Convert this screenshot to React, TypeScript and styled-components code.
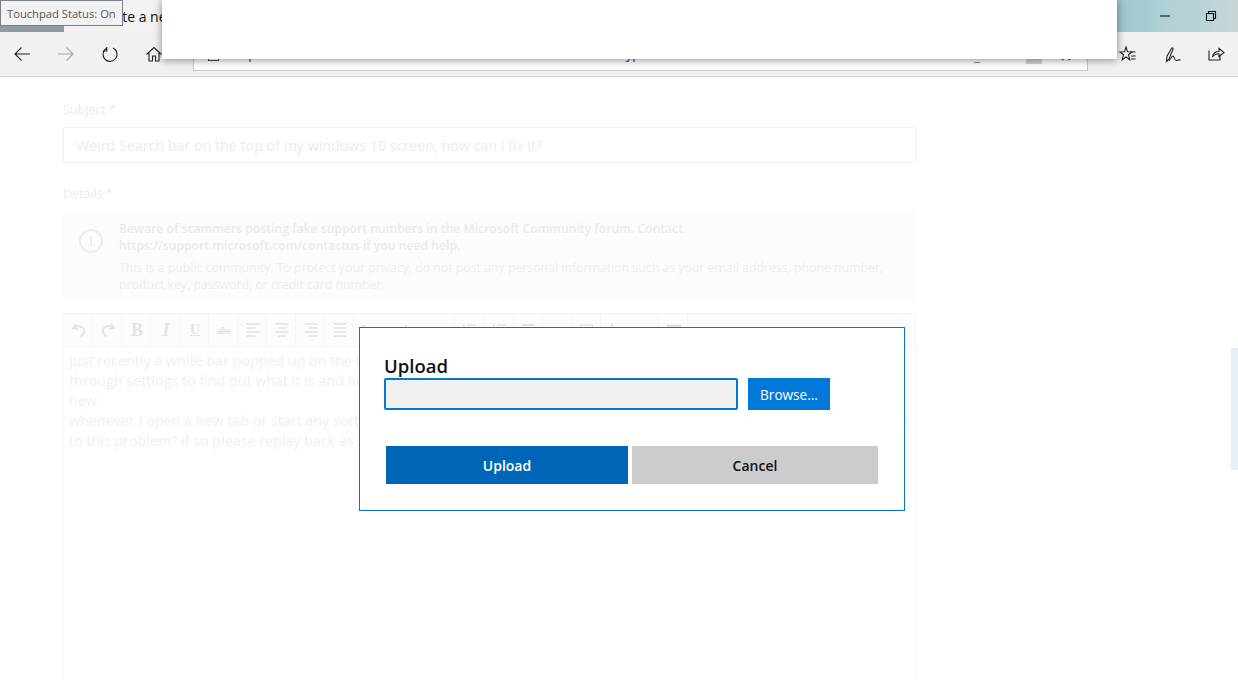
import React from "react"
import styled, { createGlobalStyle } from "styled-components"

const GlobalStyle = createGlobalStyle`
  html, body {
    margin: 0;
    padding: 0;
    background: #fff;
    overflow: hidden;
  }
  * {
    box-sizing: border-box;
  }
`;

const Icon = ({ children, color = "#222" }: { children: React.ReactNode; color?: string }) => (
  <svg width="20" height="20" viewBox="0 0 20 20" fill="none" stroke={color} strokeWidth="1.1">
    {children}
  </svg>
)

const EditorIcon = ({ children }: { children: React.ReactNode }) => (
  <svg width="16" height="16" viewBox="0 0 16 16" fill="none" stroke="#e3e3e3" strokeWidth="2">
    {children}
  </svg>
)

const alignLines = (a: number[], b: number[]) => (
  <>
    {[2, 6, 10, 14].map((y, i) => (
      <path key={y} d={`M${(i % 2 ? b : a)[0]} ${y}H${(i % 2 ? b : a)[1]}`} strokeWidth="1.6" />
    ))}
  </>
)

export default function App() {
  const tools: { id: string; node: React.ReactNode }[] = [
    { id: "undo", node: <EditorIcon><path d="M5 2L2 6l5 1M3 5.500C8 3 14 5 13 10c-.4 2-2 3.500-3.500 4.500" /></EditorIcon> },
    { id: "redo", node: <EditorIcon><path d="M11 2l3 4-5 1M13 5.500C8 3 2 5 3 10c.4 2 2 3.500 3.500 4.500" /></EditorIcon> },
    { id: "bold", node: <BoldGlyph>B</BoldGlyph> },
    { id: "italic", node: <ItalicGlyph>I</ItalicGlyph> },
    { id: "underline", node: <UnderGlyph>U</UnderGlyph> },
    { id: "strike", node: <StrikeGlyph>abc</StrikeGlyph> },
    { id: "left", node: <EditorIcon>{alignLines([1.5, 14.5], [1.5, 10.5])}</EditorIcon> },
    { id: "center", node: <EditorIcon>{alignLines([1.5, 14.5], [4, 12])}</EditorIcon> },
    { id: "right", node: <EditorIcon>{alignLines([1.5, 14.5], [5.5, 14.5])}</EditorIcon> },
    { id: "justify", node: <EditorIcon>{alignLines([1.5, 14.5], [1.5, 14.5])}</EditorIcon> },
  ]

  // the rest of this row is mostly behind the dialog, only the tops show
  const moreTools: { id: string; width: number; node?: React.ReactNode }[] = [
    { id: "format", width: 101, node: <EditorIcon><path d="M-36 4h5M8 4h2" strokeWidth="1.4" /></EditorIcon> },
    { id: "bullets", width: 29, node: <EditorIcon><path d="M2 2v3M5 3h9M2 8h12" strokeWidth="1.4" /></EditorIcon> },
    { id: "numbers", width: 30, node: <EditorIcon><path d="M2 2v3M5 3h9M2 8h12" strokeWidth="1.4" /></EditorIcon> },
    { id: "rule", width: 29, node: <EditorIcon><path d="M1 3h13" strokeWidth="2" /></EditorIcon> },
    { id: "blank", width: 29 },
    { id: "image", width: 29, node: <EditorIcon><rect x="1.500" y="3" width="12" height="10" strokeWidth="1.200" /></EditorIcon> },
    { id: "font", width: 58, node: <EditorIcon><path d="M-14 8l3-6 3 6" strokeWidth="1.200" /></EditorIcon> },
    { id: "table", width: 29, node: <EditorIcon><path d="M1 7h14" strokeWidth="9" /></EditorIcon> },
  ]

  return (
    <Screen>
      <GlobalStyle />

      <TitleBar>
        <TabArea>
          <TabStrip />
          <TabTitle>Create a new</TabTitle>
        </TabArea>
        <WindowArea>
          <WindowButton>
            <svg width="12" height="12" viewBox="0 0 12 12" fill="none" stroke="#111" strokeWidth="1.1">
              <path d="M1 6h10" />
            </svg>
          </WindowButton>
          <WindowButton>
            <svg width="12" height="12" viewBox="0 0 12 12" fill="none" stroke="#111" strokeWidth="1.1">
              <path d="M1.500 3.500h7v7h-7zM3.500 3.500v-2h7v7h-2" />
            </svg>
          </WindowButton>
        </WindowArea>
      </TitleBar>

      <NavBar>
        <NavLeft>
          <NavButton>
            <Icon><path d="M18 10H3M9.500 3.500L3 10l6.500 6.500" /></Icon>
          </NavButton>
          <NavButton>
            <Icon color="#a8a8a8"><path d="M2 10h15M10.500 3.500L17 10l-6.500 6.500" /></Icon>
          </NavButton>
          <NavButton>
            <Icon><path d="M6.500 3.800A7 7 0 1 0 13 3.500M6.800 2.500v4h-4" transform="translate(0 .5)" /></Icon>
          </NavButton>
          <NavButton>
            <Icon><path d="M2.500 10.500L10 3.500l7.500 7M5 9v8h3.500v-5h3v5H15V9" /></Icon>
          </NavButton>
        </NavLeft>
        <AddressBar>
          <LockMark />
          <AddressUrl>https://answers.microsoft.com/en-us/windows/forum/all/create/type</AddressUrl>
          <ReadingMark />
          <AddressMark />
          <AddressStar>
            <svg width="14" height="14" viewBox="0 0 14 14" fill="none" stroke="#333" strokeWidth="1">
              <path d="M7 1l1.800 4.200 4.400.4-3.300 2.900 1 4.400L7 10.600l-3.900 2.300 1-4.400L.8 5.600l4.400-.4z" />
            </svg>
          </AddressStar>
        </AddressBar>
        <NavRight>
          <NavButton>
            <Icon>
              <path d="M8 3l1.500 4.700 4.500.2-3.500 2.900 1.300 5L8 13l-3.800 2.800 1.300-5L2 7.900l4.500-.2z" />
              <path d="M12 8h5.500M13 12h4.500M13 15h4.500" />
            </Icon>
          </NavButton>
          <NavButton>
            <Icon>
              <path d="M4.500 17.500L5 12l4.500-7.500c.7-1.100 2-.5 1.500.7L7 15z" />
              <path d="M7 17c2-3 3-5 4-5s1.500 4.500 3 4.500 2-1 4.500-.5" />
            </Icon>
          </NavButton>
          <NavButton>
            <Icon><path d="M3 6.500V16h11v-4M6.500 13c.5-3.500 3-5.500 6.500-5.500V4.500L18 8.500l-5 4v-2.800c-3 0-5 1-6.500 3.300z" /></Icon>
          </NavButton>
        </NavRight>
      </NavBar>

      <Page>
        <Form>
          <FieldLabel>Subject <Required>*</Required></FieldLabel>
          <SubjectInput>Weird Search bar on the top of my windows 10 screen, how can i fix it?</SubjectInput>

          <DetailsLabel>Details <Required>*</Required></DetailsLabel>
          <Notice>
            <NoticeIcon>!</NoticeIcon>
            <NoticeBody>
              <NoticeStrong>
                Beware of scammers posting fake support numbers in the Microsoft Community forum. Contact
                https://support.microsoft.com/contactus if you need help.
              </NoticeStrong>
              <NoticeText>
                This is a public community. To protect your privacy, do not post any personal information such as your email address, phone number,
                product key, password, or credit card number.
              </NoticeText>
            </NoticeBody>
          </Notice>

          <Editor>
            <EditorToolbar>
              {tools.map((t) => (
                <ToolCell key={t.id} $width={29}>{t.node}</ToolCell>
              ))}
              {moreTools.map((t) => (
                <ToolCell key={t.id} $width={t.width}>{t.node}</ToolCell>
              ))}
            </EditorToolbar>
            <EditorBody>
              Just recently a white bar popped up on the top of my screen and i don't know what it is. I have looked
              <br />
              through settings to find out what it is and nothing has come up, i have tried everything. My computer is
              <br />
              new.
              <br />
              whenever I open a new tab or start any sort of program it stays on the top of my screen, is there some good workable solution
              <br />
              to this problem? if so please replay back as soon as possible, thank you.
            </EditorBody>
          </Editor>
        </Form>
        <ScrollHint />
      </Page>

      <TopSheet />
      <Tooltip>Touchpad Status: On</Tooltip>

      <Dialog>
        <DialogTitle>Upload</DialogTitle>
        <FileRow>
          <FileInput />
          <BrowseButton>Browse...</BrowseButton>
        </FileRow>
        <ActionRow>
          <ActionButton $primary>Upload</ActionButton>
          <ActionButton>Cancel</ActionButton>
        </ActionRow>
      </Dialog>
    </Screen>
  )
}

const Screen = styled.div`
  position: relative;
  width: 1238px;
  height: 680px;
  overflow: hidden;
  background: #fff;
  font-family: "Open Sans", "Noto Sans", sans-serif;
`;

const TitleBar = styled.div`
  display: flex;
  height: 32px;
`;

const TabArea = styled.div`
  position: relative;
  width: 1117px;
  background: #f2f2f2;
`;

const TabStrip = styled.div`
  position: absolute;
  left: 0;
  bottom: 0;
  width: 64px;
  height: 7px;
  background: #8f9ca3;
`;

const TabTitle = styled.div`
  padding: 7px 0 0 92px;
  font-size: 14px;
  line-height: 20px;
  color: #111;
  white-space: nowrap;
`;

const WindowArea = styled.div`
  flex: 1;
  display: flex;
  justify-content: flex-end;
  padding-right: 4px;
  background: linear-gradient(90deg, #9fc6cf 0%, #afd0d6 40%, #c6d6d6 100%);
`;

const WindowButton = styled.div`
  width: 46px;
  height: 32px;
  display: flex;
  align-items: center;
  justify-content: center;
`;

const NavBar = styled.div`
  display: flex;
  align-items: flex-start;
  height: 45px;
  background: #f1f1f1;
  border-bottom: 1px solid #d4d4d4;
`;

const NavLeft = styled.div`
  display: flex;
  width: 193px;
`;

const NavRight = styled.div`
  display: flex;
  padding-left: 18px;
`;

const NavButton = styled.div`
  width: 44px;
  height: 44px;
  display: flex;
  align-items: center;
  justify-content: center;
  flex-shrink: 0;
`;

const AddressBar = styled.div`
  display: flex;
  align-items: center;
  width: 895px;
  height: 39px;
  padding: 5px 14px 0 14px;
  background: #fff;
  border: 1px solid #c9c9c9;
  border-top: 0;
`;

const LockMark = styled.div`
  width: 11px;
  height: 13px;
  margin-top: 2px;
  border: 1px solid #555;
`;

const AddressUrl = styled.div`
  flex: 1;
  padding-left: 12px;
  font-size: 13px;
  color: #333;
  white-space: nowrap;
`;

const ReadingMark = styled.div`
  width: 6px;
  height: 1px;
  margin: 17px 46px 0 0;
  background: #888;
`;

const AddressMark = styled.div`
  width: 16px;
  height: 6px;
  margin: 14px 17px 0 0;
  background: #d2d2d2;
`;

const AddressStar = styled.div`
  width: 14px;
  height: 14px;
  line-height: 0;
`;

const Page = styled.div`
  position: relative;
  padding: 24px 0 0 63px;
`;

const Form = styled.div`
  width: 853px;
`;

const FieldLabel = styled.div`
  font-size: 12.5px;
  line-height: 17px;
  color: #eaeaea;
`;

const DetailsLabel = styled(FieldLabel)`
  margin-top: 22px;
`;

const Required = styled.span`
  color: #f7e6e6;
`;

const SubjectInput = styled.div`
  margin-top: 9px;
  height: 36px;
  padding: 0 12px;
  border: 1px solid #f0f0f0;
  border-radius: 2px;
  font-size: 14.25px;
  line-height: 35px;
  color: #ebebeb;
`;

const Notice = styled.div`
  display: flex;
  margin-top: 10px;
  height: 88px;
  padding: 8px 16px 0 16px;
  background: #fcfcfc;
`;

const NoticeIcon = styled.div`
  flex-shrink: 0;
  width: 24px;
  height: 24px;
  margin: 9px 16px 0 0;
  border: 2px solid #ededed;
  border-radius: 50%;
  font-size: 14px;
  line-height: 20px;
  text-align: center;
  color: #e6e6e6;
`;

const NoticeBody = styled.div`
  flex: 1;
  font-size: 12.3px;
  line-height: 17px;
`;

const NoticeStrong = styled.div`
  font-size: 12.2px;
  font-weight: 600;
  color: #ebebeb;
`;

const NoticeText = styled.div`
  margin-top: 5px;
  color: #eeeeee;
`;

const Editor = styled.div`
  margin-top: 13px;
  height: 400px;
  border: 1px solid #f5f5f5;
`;

const EditorToolbar = styled.div`
  display: flex;
  height: 33px;
  background: #fcfcfc;
  border-bottom: 1px solid #f5f5f5;
`;

const ToolCell = styled.div<{ $width: number }>`
  width: ${(p) => p.$width}px;
  height: 32px;
  display: flex;
  align-items: center;
  justify-content: center;
  border-right: 1px solid #f6f6f6;
  padding-left: 2px;
  svg {
    overflow: visible;
  }
`;

const BoldGlyph = styled.span`
  font-family: "Liberation Serif", serif;
  font-size: 18px;
  font-weight: 700;
  color: #e3e3e3;
`;

const ItalicGlyph = styled(BoldGlyph)`
  font-style: italic;
`;

const UnderGlyph = styled(BoldGlyph)`
  font-size: 14px;
  text-decoration: underline;
`;

const StrikeGlyph = styled(BoldGlyph)`
  font-size: 10px;
  text-decoration: line-through;
`;

const EditorBody = styled.div`
  padding: 4px 5px;
  font-size: 14.3px;
  line-height: 20px;
  color: #efefef;
  white-space: nowrap;
`;

const ScrollHint = styled.div`
  position: absolute;
  top: 271px;
  right: 0;
  width: 7px;
  height: 122px;
  background: #e4eff8;
`;

const TopSheet = styled.div`
  position: absolute;
  top: 0;
  left: 162px;
  width: 955px;
  height: 59px;
  background: #fff;
  box-shadow: 0 1px 8px rgba(0, 0, 0, 0.45);
`;

const Tooltip = styled.div`
  position: absolute;
  top: 0;
  left: 0;
  width: 123px;
  height: 26px;
  padding-left: 6px;
  background: #f2f2f2;
  border: 1px solid #7a7f8e;
  font-size: 11.2px;
  line-height: 25px;
  color: #575757;
  white-space: nowrap;
`;

const Dialog = styled.div`
  position: absolute;
  top: 327px;
  left: 359px;
  width: 546px;
  height: 184px;
  padding: 26px 26px 0 24px;
  background: #fff;
  border: 1px solid #0b74c9;
`;

const DialogTitle = styled.div`
  font-size: 18.5px;
  font-weight: 600;
  line-height: 24px;
  color: #111;
`;

const FileRow = styled.div`
  display: flex;
  gap: 10px;
`;

const FileInput = styled.div`
  width: 354px;
  height: 32px;
  background: #f0f0f0;
  border: 2px solid #0078d7;
  border-radius: 2px;
`;

const BrowseButton = styled.div`
  width: 82px;
  height: 32px;
  background: #0078d7;
  color: #fff;
  font-size: 13.6px;
  line-height: 33px;
  text-align: center;
`;

const ActionRow = styled.div`
  display: flex;
  gap: 4px;
  margin: 36px 0 0 2px;
`;

const ActionButton = styled.div<{ $primary?: boolean }>`
  width: ${(p) => (p.$primary ? "242px" : "246px")};
  height: 38px;
  background: ${(p) => (p.$primary ? "#0067b8" : "#cccccc")};
  color: ${(p) => (p.$primary ? "#fff" : "#111")};
  font-size: 14px;
  font-weight: 600;
  line-height: 39px;
  text-align: center;
`;
